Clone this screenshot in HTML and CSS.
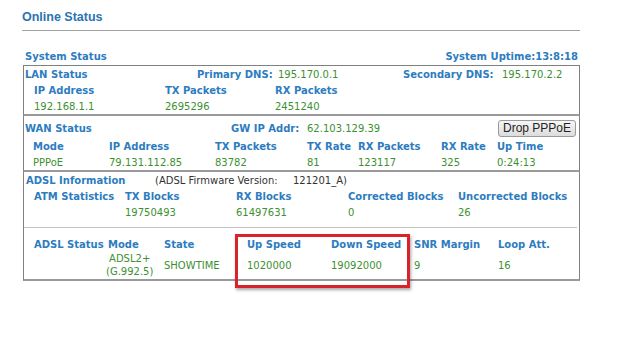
FILE: index.html
```html
<!DOCTYPE html>
<html lang="en">
<head>
    <meta charset="UTF-8">
    <title>Online Status</title>
    <link rel="stylesheet" href="styles.css">
</head>
<body>
    <div class="page">
        <div class="title">Online Status</div>

        <div class="sys-row">
            <span>System Status</span>
            <span>System Uptime:13:8:18</span>
        </div>

        <div class="box lan">
            <div class="row lan-head">
                <span class="lbl">LAN Status</span>
                <span class="lbl">Primary DNS:</span>
                <span class="val">195.170.0.1</span>
                <span class="lbl">Secondary DNS:</span>
                <span class="val">195.170.2.2</span>
            </div>
            <div class="row lan-cols">
                <span class="lbl">IP Address</span>
                <span class="lbl">TX Packets</span>
                <span class="lbl">RX Packets</span>
            </div>
            <div class="row lan-cols">
                <span class="val">192.168.1.1</span>
                <span class="val">2695296</span>
                <span class="val">2451240</span>
            </div>
        </div>

        <div class="box wan">
            <div class="row wan-head">
                <span class="lbl">WAN Status</span>
                <span class="lbl">GW IP Addr:</span>
                <span class="val">62.103.129.39</span>
                <button class="btn">Drop PPPoE</button>
            </div>
            <div class="row wan-cols">
                <span class="lbl">Mode</span>
                <span class="lbl">IP Address</span>
                <span class="lbl">TX Packets</span>
                <span class="lbl">TX Rate</span>
                <span class="lbl">RX Packets</span>
                <span class="lbl">RX Rate</span>
                <span class="lbl">Up Time</span>
            </div>
            <div class="row wan-cols">
                <span class="val">PPPoE</span>
                <span class="val">79.131.112.85</span>
                <span class="val">83782</span>
                <span class="val">81</span>
                <span class="val">123117</span>
                <span class="val">325</span>
                <span class="val">0:24:13</span>
            </div>
        </div>

        <div class="box adsl">
            <div class="row adsl-head">
                <span class="lbl">ADSL Information</span>
                <span class="txt">(ADSL Firmware Version:</span>
                <span class="txt">121201_A)</span>
            </div>
            <div class="row atm-cols">
                <span class="lbl">ATM Statistics</span>
                <span class="lbl">TX Blocks</span>
                <span class="lbl">RX Blocks</span>
                <span class="lbl">Corrected Blocks</span>
                <span class="lbl">Uncorrected Blocks</span>
            </div>
            <div class="row atm-cols">
                <span></span>
                <span class="val">19750493</span>
                <span class="val">61497631</span>
                <span class="val">0</span>
                <span class="val">26</span>
            </div>
            <div class="sep"></div>
            <div class="row st-cols">
                <span class="lbl">ADSL Status</span>
                <span class="lbl">Mode</span>
                <span class="lbl">State</span>
                <span class="lbl">Up Speed</span>
                <span class="lbl">Down Speed</span>
                <span class="lbl">SNR Margin</span>
                <span class="lbl">Loop Att.</span>
            </div>
            <div class="row st-cols st-vals">
                <span></span>
                <span class="val mode">ADSL2+<br>(G.992.5)</span>
                <span class="val">SHOWTIME</span>
                <span class="val">1020000</span>
                <span class="val">19092000</span>
                <span class="val">9</span>
                <span class="val">16</span>
            </div>
        </div>
    </div>

    <div class="highlight"></div>
</body>
</html>
```

FILE: styles.css
```css
* {
    margin: 0;
    padding: 0;
    box-sizing: border-box;
}

body {
    font-family: "DejaVu Sans", Verdana, sans-serif;
    font-size: 10px;
    background: #fff;
    color: #333;
}

.page {
    margin-left: 22px;
    width: 558px;
}

.title {
    font-family: "Liberation Sans", Arial, sans-serif;
    font-size: 12.5px;
    font-weight: bold;
    color: #2b74b3;
    line-height: 16px;
    padding-top: 9px;
    padding-bottom: 5px;
    border-bottom: 1px solid #a0a0a0;
}

.sys-row {
    display: flex;
    justify-content: space-between;
    margin-top: 18px;
    height: 16px;
    line-height: 16px;
    padding: 0 2px 0 3px;
    font-weight: bold;
    color: #2d7cc0;
}

.box {
    margin-left: 1px;
    border: 1px solid #808080;
    border-bottom: 2px solid #9a9a9a;
}

.row {
    display: grid;
    height: 16px;
    align-items: center;
    white-space: nowrap;
}

.lbl {
    font-weight: bold;
    color: #2d7cc0;
}

.val {
    color: #3d9030;
}

.txt {
    color: #333;
}

.lan-head {
    padding-left: 1px;
    grid-template-columns: 172px 81px 125px 99px auto;
}

.lan-cols {
    padding-left: 10px;
    grid-template-columns: 131px 110px auto;
}

.wan {
    border-top: none;
}

.wan-head {
    height: 22px;
    padding: 2px 3px 0 1px;
    grid-template-columns: 206px 76px 1fr auto;
}

.btn {
    font-family: "Liberation Sans", Arial, sans-serif;
    font-size: 12px;
    color: #222;
    width: 78px;
    height: 17px;
    border: 1px solid #9a9a9a;
    border-radius: 3px;
    background: linear-gradient(#f6f6f6, #dcdcdc);
}

.wan-cols {
    padding-left: 9px;
    grid-template-columns: 76px 106px 92px 51px 83px 56px auto;
}

.adsl {
    border-top: none;
}

.adsl-head {
    padding-left: 2px;
    grid-template-columns: 129px 138px auto;
}

.atm-cols {
    padding-left: 10px;
    grid-template-columns: 91px 111px 112px 110px auto;
}

.sep {
    margin: 7px 2px 8px 0;
    border-top: 1px solid #c4c4c4;
}

.st-cols {
    padding-left: 10px;
    grid-template-columns: 74px 56px 83px 84px 83px 84px auto;
}

.st-vals {
    height: 26px;
    margin-bottom: 1px;
}

.mode {
    line-height: 13px;
    text-align: center;
    justify-self: start;
    margin-left: -2px;
}

.highlight {
    position: absolute;
    left: 235px;
    top: 234px;
    width: 175px;
    height: 54px;
    border: 3px solid #d9232b;
    box-shadow: 1px 2px 3px rgba(0, 0, 0, 0.35);
}
```
